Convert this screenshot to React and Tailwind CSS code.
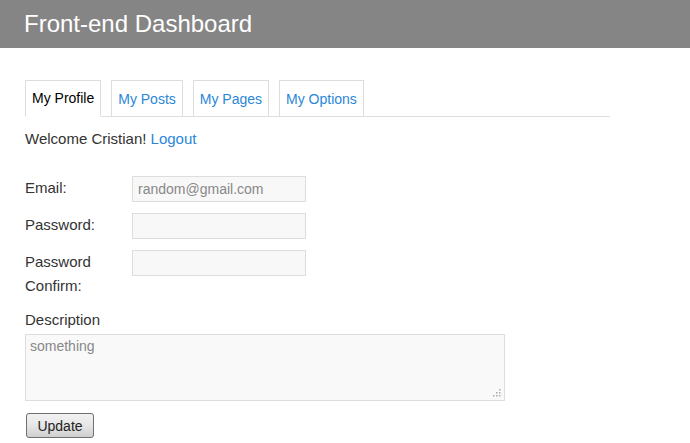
import { useState } from 'react';

const tabs = ['My Profile', 'My Posts', 'My Pages', 'My Options'];

function Row({ label, children }) {
  return (
    <div className="flex items-start mt-[11px] first:mt-0">
      <label className="w-[107px] leading-6 text-[15px] text-[#333]">{label}</label>
      {children}
    </div>
  );
}

export default function App() {
  const [active] = useState(0);

  return (
    <div className="min-h-[443px] bg-white text-[14px] font-['Liberation_Sans',Arial,sans-serif] text-[#333]">
      <header className="h-12 bg-[#858585] px-6 flex items-center">
        <h1 className="text-[24px] leading-none text-white">Front-end Dashboard</h1>
      </header>

      <div className="pl-[25px] w-[610px]">
        {/* tabs */}
        <ul className="mt-8 flex gap-[10px] border-b border-[#dddddd] h-[37px]">
          {tabs.map((t, i) => (
            <li
              key={t}
              className={
                'h-[37px] px-[6px] border border-[#dddddd] flex items-center ' +
                (i === active
                  ? 'border-b-white text-black bg-white'
                  : 'border-b-0 h-[36px] text-[#2a87d8]')
              }
            >
              {t}
            </li>
          ))}
        </ul>

        <p className="mt-[12px] leading-5 text-[15px]">
          Welcome Cristian! <a className="text-[#2a87d8]">Logout</a>
        </p>

        <form className="mt-[27px]" onSubmit={(e) => e.preventDefault()}>
          <Row label="Email:">
            <input
              readOnly
              value="random@gmail.com"
              className="w-[174px] h-[26px] border border-[#dddddd] bg-[#f8f8f8] px-[5px] text-[#888] outline-none"
            />
          </Row>
          <Row label="Password:">
            <input
              type="password"
              className="w-[174px] h-[26px] border border-[#dddddd] bg-[#f8f8f8] px-[5px] outline-none"
            />
          </Row>
          <Row label={<>Password<br />Confirm:</>}>
            <input
              type="password"
              className="w-[174px] h-[26px] border border-[#dddddd] bg-[#f8f8f8] px-[5px] outline-none"
            />
          </Row>

          <div className="mt-[10px] leading-6 text-[15px]">Description</div>
          <div className="relative mt-[2px] w-[480px]">
            <textarea
              readOnly
              value="something"
              className="block w-[480px] h-[67px] border border-[#dddddd] bg-[#f9f9f9] px-[4px] py-[1px] text-[#888] resize-none outline-none"
            />
            <svg
              className="absolute right-[4px] bottom-[4px]"
              width="9"
              height="9"
              viewBox="0 0 9 9"
            >
              <g fill="#aaa">
                <rect x="7" y="1" width="1.5" height="1.5" />
                <rect x="4" y="4" width="1.5" height="1.5" />
                <rect x="7" y="4" width="1.5" height="1.5" />
                <rect x="1" y="7" width="1.5" height="1.5" />
                <rect x="4" y="7" width="1.5" height="1.5" />
                <rect x="7" y="7" width="1.5" height="1.5" />
              </g>
            </svg>
          </div>

          <button
            type="submit"
            className="mt-[12px] ml-px w-[68px] h-[25px] rounded-[3px] border border-[#707070] bg-gradient-to-b from-[#f2f2f2] via-[#e6e6e6] to-[#cfcfcf] text-[#222] leading-none"
          >
            Update
          </button>
        </form>
      </div>
    </div>
  );
}
